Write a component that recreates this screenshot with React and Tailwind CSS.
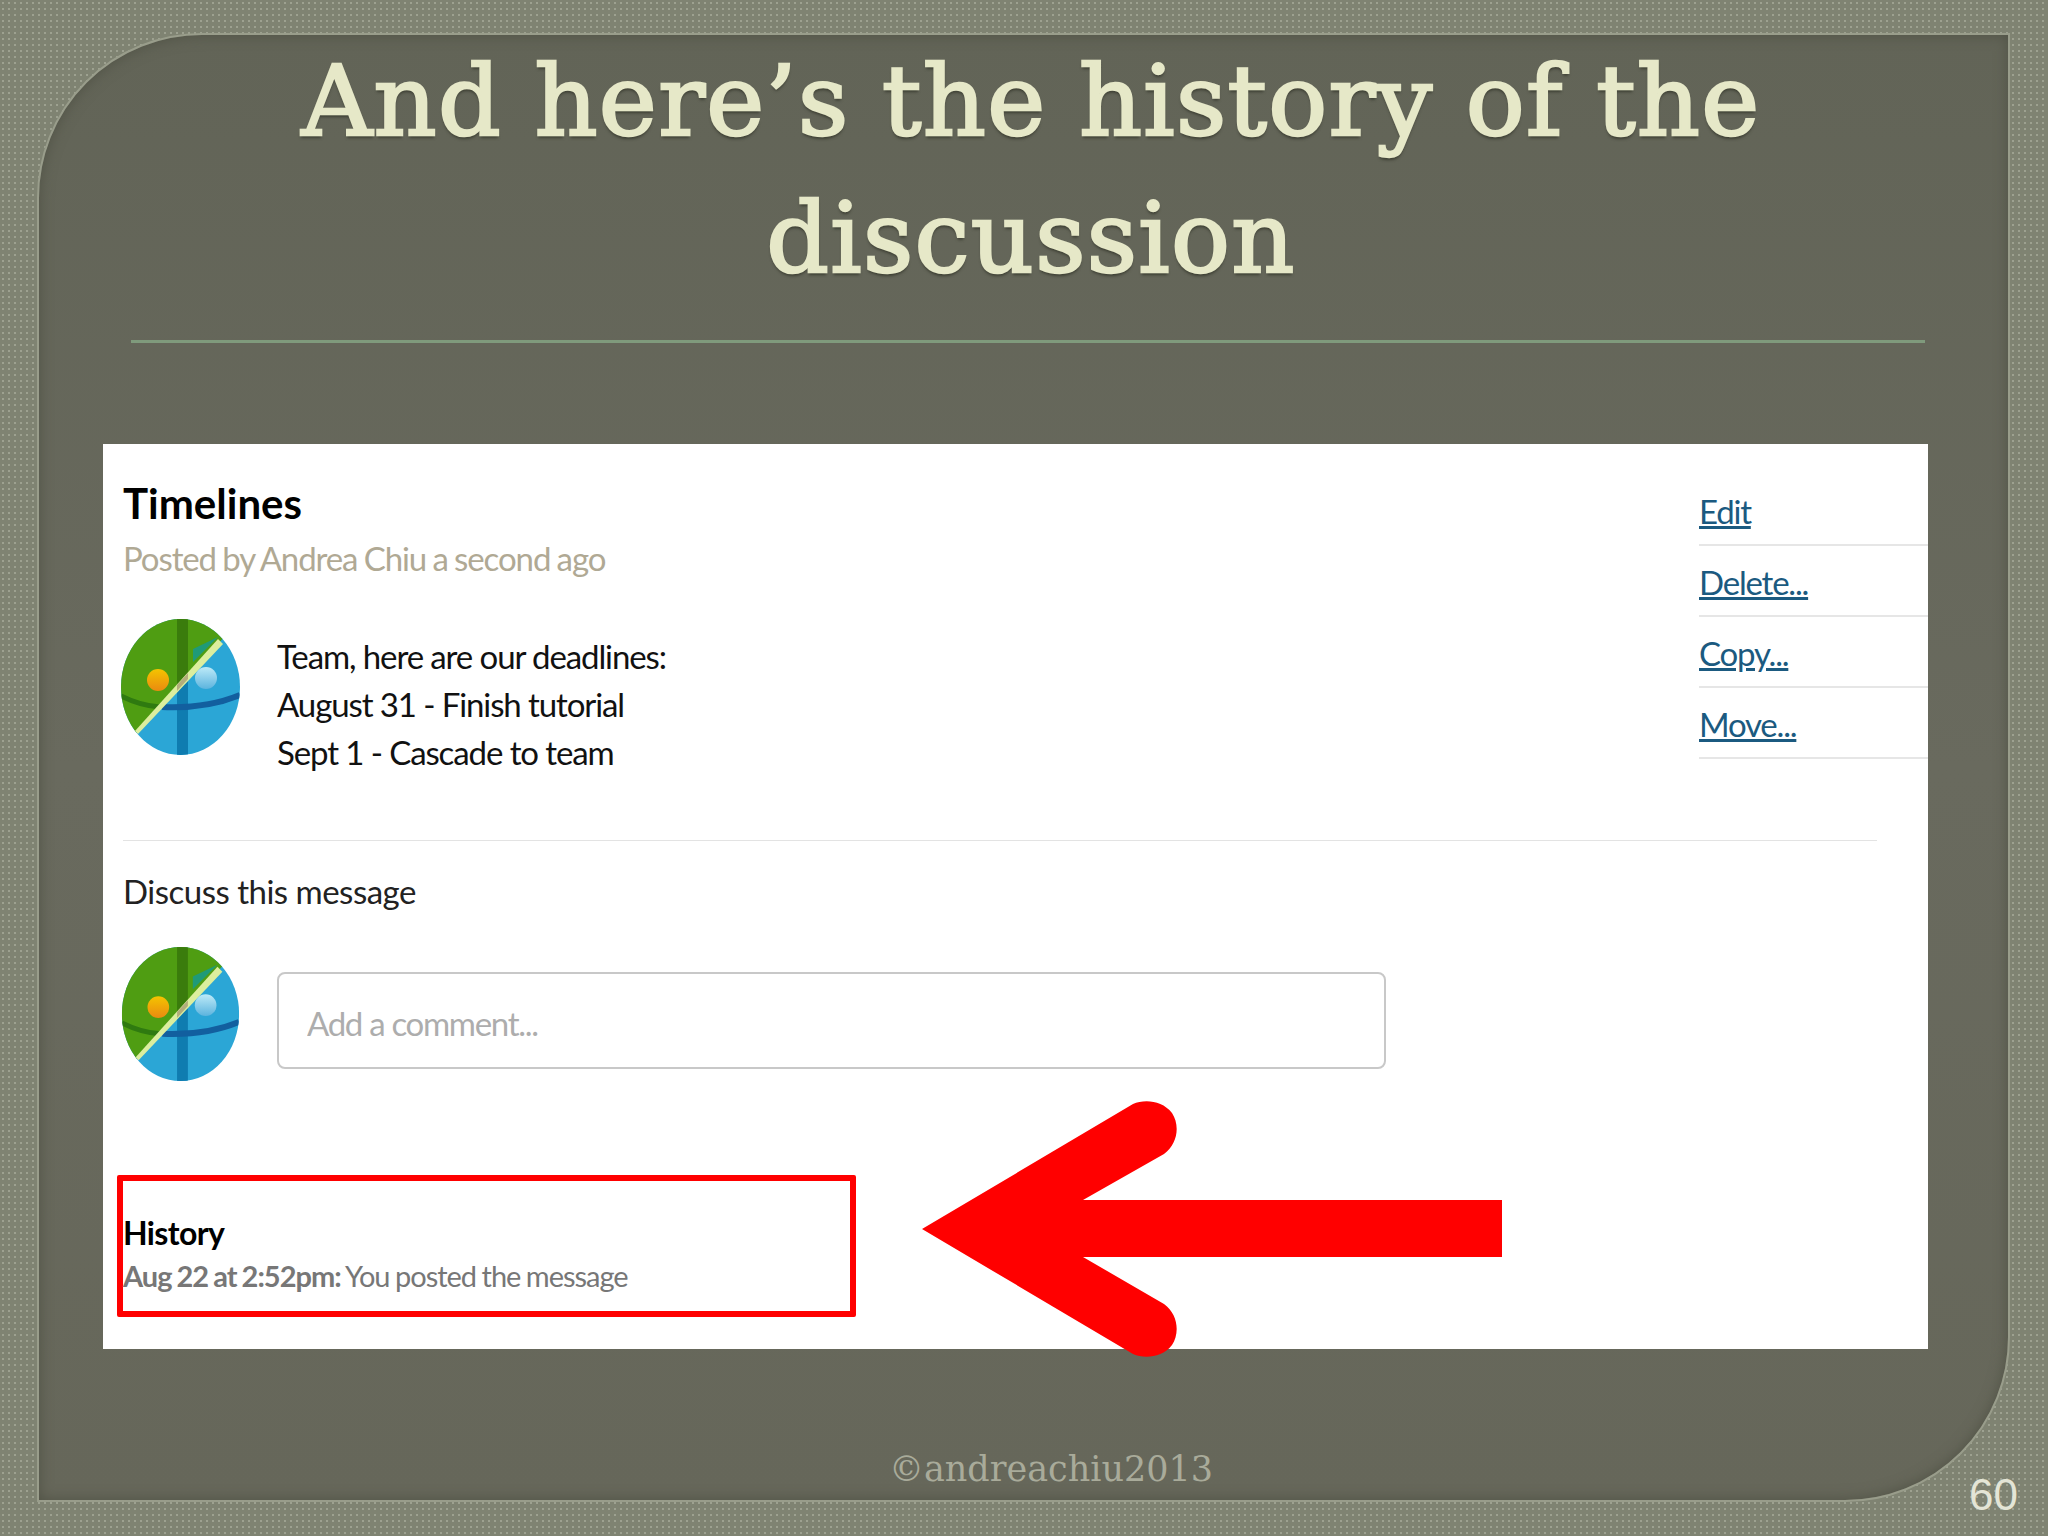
function Avatar({ className }) {
  return (
    <svg viewBox="0 0 119 136" className={className}>
      <defs>
        <clipPath id="egg">
          <ellipse cx="59.5" cy="68" rx="59.5" ry="68" />
        </clipPath>
        <linearGradient id="sun" x1="0" y1="0" x2="0" y2="1">
          <stop offset="0" stopColor="#f4c400" />
          <stop offset="1" stopColor="#ea8a10" />
        </linearGradient>
        <linearGradient id="ice" x1="0" y1="0" x2="0" y2="1">
          <stop offset="0" stopColor="#bdeaf8" />
          <stop offset="1" stopColor="#5cb4de" />
        </linearGradient>
      </defs>
      <g clipPath="url(#egg)">
        <rect width="119" height="136" fill="#2ba6d6" />
        <path d="M0 0H120L-5 136H0Z" fill="#4f9d12" />
        <path d="M56 0H67V58L56 70Z" fill="#3a7c0c" />
        <path d="M56 70L67 58V136H56Z" fill="#0f7cb0" />
        <path d="M72 30L97 18L72 43Z" fill="#1f9a78" />
        <path d="M0 77Q20 87 39 88" fill="none" stroke="#2f7a10" strokeWidth="5" />
        <path d="M41 88Q85 90 119 76" fill="none" stroke="#125f9f" strokeWidth="6" />
        <path d="M97 20L102 25L17 115L14 112Z" fill="#dcee9e" />
        <path d="M56 66L67 54L67 60L56 72Z" fill="#b3ad7c" />
      </g>
      <circle cx="37" cy="61" r="11" fill="url(#sun)" />
      <circle cx="85" cy="59" r="11" fill="url(#ice)" />
    </svg>
  )
}

function Arrow({ className }) {
  return (
    <svg viewBox="0 0 580 260" className={className}>
      <path
        d="M0 129L211 4C222 -1 240 0 250 13C258 25 256 44 242 54L161 100H580V157H161L242 204C256 214 258 233 250 245C240 258 222 259 211 254Z"
        fill="#ff0000"
      />
    </svg>
  )
}

const links = ['Edit', 'Delete...', 'Copy...', 'Move...']

export default function App() {
  return (
    <div className="relative h-[1536px] w-[2048px] overflow-hidden bg-[#7f8372] bg-[radial-gradient(#9da190_1.2px,transparent_1.4px)] bg-[length:6px_6px] pl-[37px] pt-[33px]">
      <div className="h-[1469px] w-[1973px] rounded-tl-[165px] rounded-br-[165px] border-2 border-[#999d8b] bg-gradient-to-b from-[#626457] via-[#696a5e] to-[#66675a] shadow-[inset_0_0_14px_#505245]">
        <h1 className="-mt-[2px] ml-[15px] text-center font-['DejaVu_Serif',serif] text-[98px] leading-[137px] tracking-[1.3px] text-[#e6e8c8] [-webkit-text-stroke:2.5px_#e6e8c8] [text-shadow:0_3px_3px_#3c3e32]">
          And here’s the history of the
          <br />
          discussion
        </h1>
        <div className="ml-[92px] mt-[33px] h-[3px] w-[1794px] bg-[#7f9a7c]" />

        <div className="relative ml-[64px] mt-[101px] h-[905px] w-[1825px] bg-white font-['Lato',sans-serif]">
          <div className="flex h-[396px]">
            <div className="flex-1 pl-[20px] pt-[39px]">
              <div className="text-[42px] font-bold leading-[40px] text-black">Timelines</div>
              <div className="mt-[15px] text-[33px] leading-[40px] tracking-[-1.1px] text-[#b0a994] [word-spacing:-1px]">
                Posted by Andrea Chiu a second ago
              </div>
              <div className="-ml-[2px] mt-[41px] flex gap-[37px]">
                <Avatar className="h-[136px] w-[119px]" />
                <div className="mt-[13px] text-[33px] leading-[48px] tracking-[-1.1px] text-[#111]">
                  <div>Team, here are our deadlines:</div>
                  <div>August 31 - Finish tutorial</div>
                  <div>Sept 1 - Cascade to team</div>
                </div>
              </div>
            </div>
            <div className="w-[229px] pt-[31px]">
              {links.map((link) => (
                <div key={link} className="flex h-[71px] items-center border-b-2 border-[#e6e6e6] pt-[3px]">
                  <a className="text-[33px] leading-[40px] tracking-[-1.2px] text-[#1b5a80] underline">{link}</a>
                </div>
              ))}
            </div>
          </div>
          <div className="ml-[20px] h-[1px] w-[1754px] bg-[#e3e3e3]" />

          <div className="ml-[20px] mt-[30px] text-[33px] leading-[40px] tracking-[-0.5px] text-[#222]">
            Discuss this message
          </div>
          <div className="ml-[18px] mt-[36px] flex items-start gap-[37px]">
            <Avatar className="h-[134px] w-[119px]" />
            <input
              placeholder="Add a comment..."
              className="mt-[25px] h-[97px] w-[1109px] rounded-lg border-2 border-[#c8c8c8] pl-[28px] pt-[5px] text-[33px] tracking-[-1.3px] placeholder:text-[#adadad]"
            />
          </div>

          <div className="ml-[14px] mt-[94px] h-[142px] w-[739px] rounded-[2px] border-[6px] border-[#ff0000] pt-[34px]">
            <div className="text-[32px] font-bold leading-[36px] tracking-[-0.6px] text-black">History</div>
            <div className="mt-[9px] text-[29px] leading-[32px] tracking-[-1px] text-[#777] [word-spacing:-1px]">
              <b>Aug 22 at 2:52pm:</b> You posted the message
            </div>
          </div>

          <Arrow className="absolute left-[819px] top-[656px] h-[260px] w-[580px]" />
        </div>

        <div className="ml-[55px] mt-[100px] text-center font-['DejaVu_Serif',serif] text-[35px] leading-[40px] text-[#a9ab9a]">
          ©andreachiu2013
        </div>
      </div>
      <div className="absolute left-[1969px] top-[1472px] font-['Liberation_Sans',sans-serif] text-[44px] leading-[46px] text-[#e4e5d6]">
        60
      </div>
    </div>
  )
}
